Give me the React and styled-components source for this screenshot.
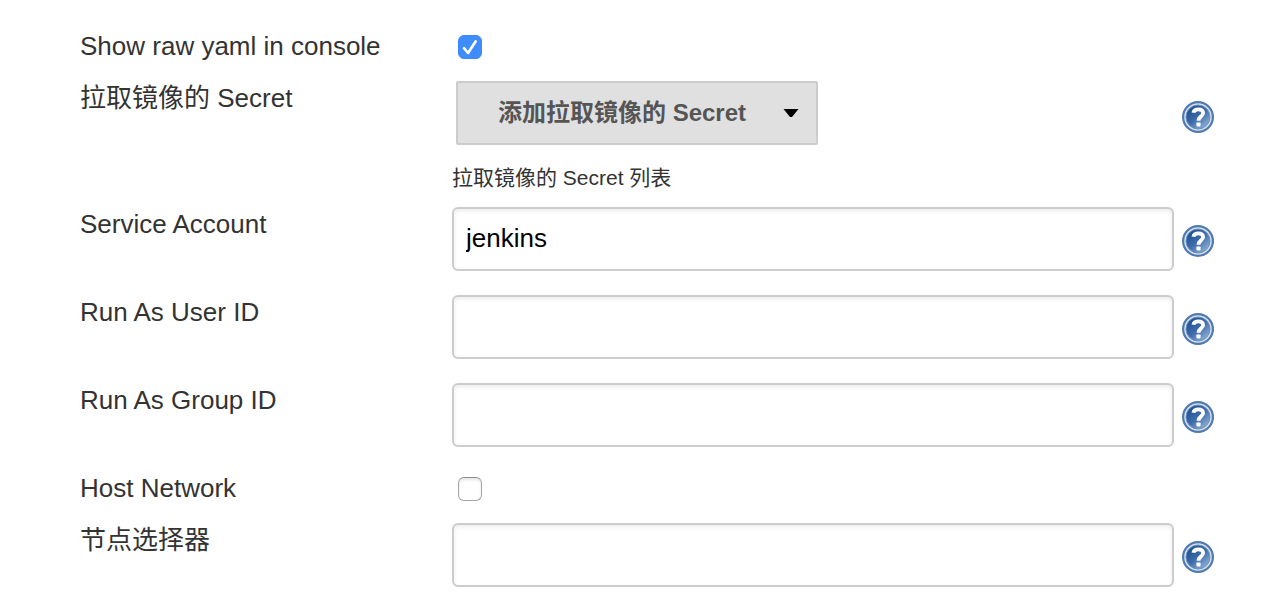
import React from "react";
import styled, { createGlobalStyle } from "styled-components";

const GlobalStyle = createGlobalStyle`
  *, *::before, *::after { box-sizing: border-box; }
  body {
    margin: 0;
    background: #fff;
    color: #333;
    font-family: "Liberation Sans", "Noto Sans CJK SC", sans-serif;
    font-size: 26px;
    line-height: 34px;
  }
`;

const Form = styled.form`
  display: flex;
  flex-direction: column;
  padding: 29px 58px 24px 80px;
`;

const Row = styled.div`
  display: grid;
  grid-template-columns: 372px minmax(0, 1fr) 32px;
  align-items: start;
  margin-bottom: ${(p) => (p.$spacious ? "24px" : "16px")};
`;

const Label = styled.label`
  justify-self: start;
`;

const Setting = styled.div`
  display: flex;
  flex-direction: column;
  align-items: flex-start;
  padding-right: 8px;
`;

const TextInput = styled.input`
  width: 100%;
  height: 64px;
  padding: 0 12px 2px;
  border: 2px solid #ccc;
  border-radius: 6px;
  background: #fff;
  box-shadow: inset 0 2px 4px rgba(0, 0, 0, 0.08);
  color: #000;
  font: inherit;
  outline: none;
`;

const CheckSlot = styled.span`
  display: grid;
  align-items: center;
  height: 36px;
  padding-left: 6px;
`;

const Checkbox = styled.input`
  grid-area: 1 / 1;
  appearance: none;
  width: 24px;
  height: 24px;
  margin: 0;
  border: 1px solid #a6a6a6;
  border-top-color: #8c8c8c;
  border-radius: 6px;
  background: #fff;
  box-shadow: inset 0 2px 3px rgba(0, 0, 0, 0.1);

  &:checked {
    border-color: #3b88fb;
    background: #3f8cfc;
    box-shadow: none;
  }

  & + svg { visibility: hidden; }
  &:checked + svg { visibility: visible; }
`;

const CheckMark = styled.svg`
  grid-area: 1 / 1;
  width: 24px;
  height: 24px;
  pointer-events: none;
`;

const MenuButton = styled.button`
  display: flex;
  align-items: center;
  height: 64px;
  margin-left: 4px;
  padding: 0 17px 0 40px;
  gap: 37px;
  border: 2px solid #ccc;
  border-radius: 2px;
  background: #e0e0e0;
  color: #555;
  font-family: inherit;
  font-size: 24px;
  font-weight: 700;
  line-height: 36px;
  white-space: nowrap;
  cursor: pointer;
`;

const Caret = styled.svg`
  width: 16px;
  height: 10px;
`;

const Description = styled.p`
  margin: 20px 0 0;
  font-size: 21px;
  line-height: 26px;
`;

const HelpButton = styled.button`
  width: 32px;
  height: 32px;
  margin-top: ${(p) => (p.$lowered ? "20px" : "18px")};
  padding: 0;
  border: 0;
  background: none;
  cursor: pointer;

  svg { display: block; width: 32px; height: 32px; }
`;

function Help({ topic, lowered = false }) {
  const id = React.useId();
  return (
    <HelpButton type="button" aria-label={`Help: ${topic}`} $lowered={lowered}>
      <svg viewBox="0 0 32 32" aria-hidden="true">
        <defs>
          <linearGradient id={id} x1="0.15" y1="0.1" x2="0.85" y2="0.9">
            <stop offset="0" stopColor="#1f4f8d" />
            <stop offset="0.5" stopColor="#3f6dab" />
            <stop offset="1" stopColor="#8daed6" />
          </linearGradient>
        </defs>
        <circle cx="16" cy="16" r="14.9" fill="#d3dfee" stroke="#507aaf" strokeWidth="2.2" />
        <circle cx="16" cy="16" r="12" fill={`url(#${id})`} stroke="#6c90be" strokeWidth="1" />
        <path
          d="M11.4 11.8C11.8 9.4 13.6 8.3 16.4 8.3c3 0 4.7 1.4 4.7 3.8 0 3.4-4.6 3.6-4.6 7.6"
          fill="none"
          stroke="#fff"
          strokeWidth="3.8"
        />
        <rect x="14.4" y="21.4" width="4.2" height="4" rx="0.8" fill="#fff" />
      </svg>
    </HelpButton>
  );
}

function TextRow({ id, label, value = "" }) {
  return (
    <Row $spacious>
      <Label htmlFor={id}>{label}</Label>
      <Setting>
        <TextInput id={id} type="text" defaultValue={value} />
      </Setting>
      <Help topic={label} />
    </Row>
  );
}

function CheckRow({ id, label, checked = false }) {
  return (
    <Row>
      <Label htmlFor={id}>{label}</Label>
      <CheckSlot>
        <Checkbox id={id} type="checkbox" defaultChecked={checked} />
        <CheckMark viewBox="0 0 24 24" aria-hidden="true">
          <path
            d="M6 13.2 10.1 18 17.7 6.3"
            fill="none"
            stroke="#fff"
            strokeWidth="2.6"
            strokeLinecap="round"
            strokeLinejoin="round"
          />
        </CheckMark>
      </CheckSlot>
    </Row>
  );
}

export default function App() {
  return (
    <>
      <GlobalStyle />
      <Form>
        <CheckRow id="show-raw-yaml" label="Show raw yaml in console" checked />
        <Row>
          <Label htmlFor="pull-secret">拉取镜像的 Secret</Label>
          <Setting>
            <MenuButton id="pull-secret" type="button" aria-haspopup="menu">
              添加拉取镜像的 Secret
              <Caret viewBox="0 0 16 10" aria-hidden="true">
                <path d="M0.5 1h15L9 9H7z" fill="#000" />
              </Caret>
            </MenuButton>
            <Description>拉取镜像的 Secret 列表</Description>
          </Setting>
          <Help topic="拉取镜像的 Secret" lowered />
        </Row>
        <TextRow id="service-account" label="Service Account" value="jenkins" />
        <TextRow id="run-as-user" label="Run As User ID" />
        <TextRow id="run-as-group" label="Run As Group ID" />
        <CheckRow id="host-network" label="Host Network" />
        <TextRow id="node-selector" label="节点选择器" />
      </Form>
    </>
  );
}
